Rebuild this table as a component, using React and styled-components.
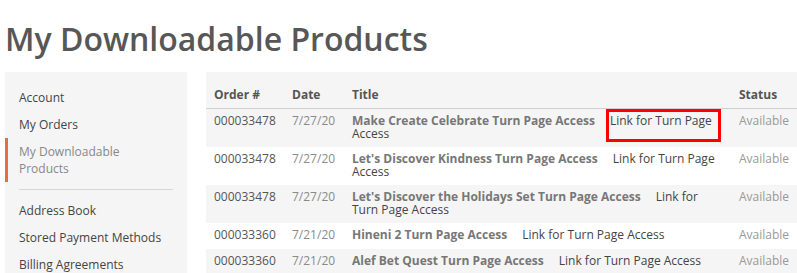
import styled, { createGlobalStyle } from "styled-components";

const GlobalStyle = createGlobalStyle`
  html, body {
    margin: 0;
    padding: 0;
    background: #fff;
    overflow: hidden;
  }
  body {
    font-family: "Open Sans", "Liberation Sans", sans-serif;
    font-size: 12px;
    color: #333;
  }
`;

const accountLinks = [
  { label: "Account" },
  { label: "My Orders" },
  { label: "My Downloadable Products", active: true },
  { divider: true },
  { label: "Address Book" },
  { label: "Stored Payment Methods" },
  { label: "Billing Agreements" },
];

const downloads = [
  { order: "000033478", date: "7/27/20", title: "Make Create Celebrate Turn Page Access", highlight: true },
  { order: "000033478", date: "7/27/20", title: "Let's Discover Kindness Turn Page Access" },
  { order: "000033478", date: "7/27/20", title: "Let's Discover the Holidays Set Turn Page Access" },
  { order: "000033360", date: "7/21/20", title: "Hineni 2 Turn Page Access" },
  { order: "000033360", date: "7/21/20", title: "Alef Bet Quest Turn Page Access" },
];

const App = () => {
  return (
    <Page>
      <GlobalStyle />
      <Heading>My Downloadable Products</Heading>
      <Columns>
        <Sidebar>
          {accountLinks.map((item, i) =>
            item.divider ? (
              <Divider key={i} />
            ) : (
              <NavItem key={i} $active={item.active}>
                {item.label}
              </NavItem>
            )
          )}
        </Sidebar>
        <Main>
          <Table>
            <thead>
              <tr>
                <Th $width="62px">Order #</Th>
                <Th $width="44px">Date</Th>
                <Th $width="371px">Title</Th>
                <Th>Status</Th>
              </tr>
            </thead>
            <tbody>
              {downloads.map((row, i) => (
                <Row key={i}>
                  <OrderCell>{row.order}</OrderCell>
                  <DateCell>{row.date}</DateCell>
                  <TitleCell>
                    <ProductName>{row.title}</ProductName>
                    <DownloadLink>Link for Turn Page Access</DownloadLink>
                    {row.highlight && <Highlight />}
                  </TitleCell>
                  <StatusCell>Available</StatusCell>
                </Row>
              ))}
            </tbody>
          </Table>
        </Main>
      </Columns>
    </Page>
  );
};

export default App;

const Page = styled.div`
  padding: 0 0 0 5px;
`;

const Heading = styled.h1`
  margin: 0;
  padding: 19px 0 0 0;
  font-family: "Open Sans", "Liberation Sans", sans-serif;
  font-weight: 600;
  font-size: 32px;
  line-height: 39px;
  color: #575757;
`;

const Columns = styled.div`
  display: flex;
  gap: 19px;
  margin-top: 14px;
  align-items: flex-start;
`;

const Sidebar = styled.nav`
  width: 182px;
  flex: none;
  background: #f5f5f5;
  padding: 12px 0 20px;
`;

const NavItem = styled.div`
  padding: 5px 14px 5px ${(p) => (p.$active ? "11px" : "14px")};
  border-left: ${(p) => (p.$active ? "3px solid #e0733a" : "none")};
  line-height: 17px;
  font-size: 12px;
  color: ${(p) => (p.$active ? "#888" : "#444")};
  padding-right: ${(p) => (p.$active ? "40px" : "10px")};
`;

const Divider = styled.div`
  height: 1px;
  background: #d6d6d6;
  margin: 7px 14px 7px 14px;
`;

const Main = styled.div`
  flex: 1;
  min-width: 0;
`;

const Table = styled.table`
  width: 100%;
  border-collapse: collapse;
  table-layout: fixed;
`;

const Th = styled.th`
  width: ${(p) => p.$width || "auto"};
  text-align: left;
  font-weight: 700;
  font-size: 12px;
  color: #555;
  background: #f5f5f5;
  padding: 16px 8px 6px;
  line-height: 14px;
  border-bottom: 1px solid #d0d0d0;
`;

const Row = styled.tr`
  &:nth-child(odd) {
    background: #f5f5f5;
  }
`;

const Cell = styled.td`
  vertical-align: top;
  padding: 6px 8px 7px;
  line-height: 12.5px;
  font-size: 12px;
`;

const OrderCell = styled(Cell)`
  color: #555;
`;

const DateCell = styled(Cell)`
  color: #8a8a8a;
`;

const TitleCell = styled(Cell)`
  position: relative;
`;

const ProductName = styled.strong`
  font-weight: 700;
  color: #777;
  margin-right: 15px;
`;

const DownloadLink = styled.span`
  color: #444;
`;

const StatusCell = styled(Cell)`
  color: #999;
  white-space: nowrap;
`;

const Highlight = styled.span`
  position: absolute;
  left: 262px;
  top: 0;
  width: 109px;
  height: 27px;
  border: 3px solid #f00;
  pointer-events: none;
`;
